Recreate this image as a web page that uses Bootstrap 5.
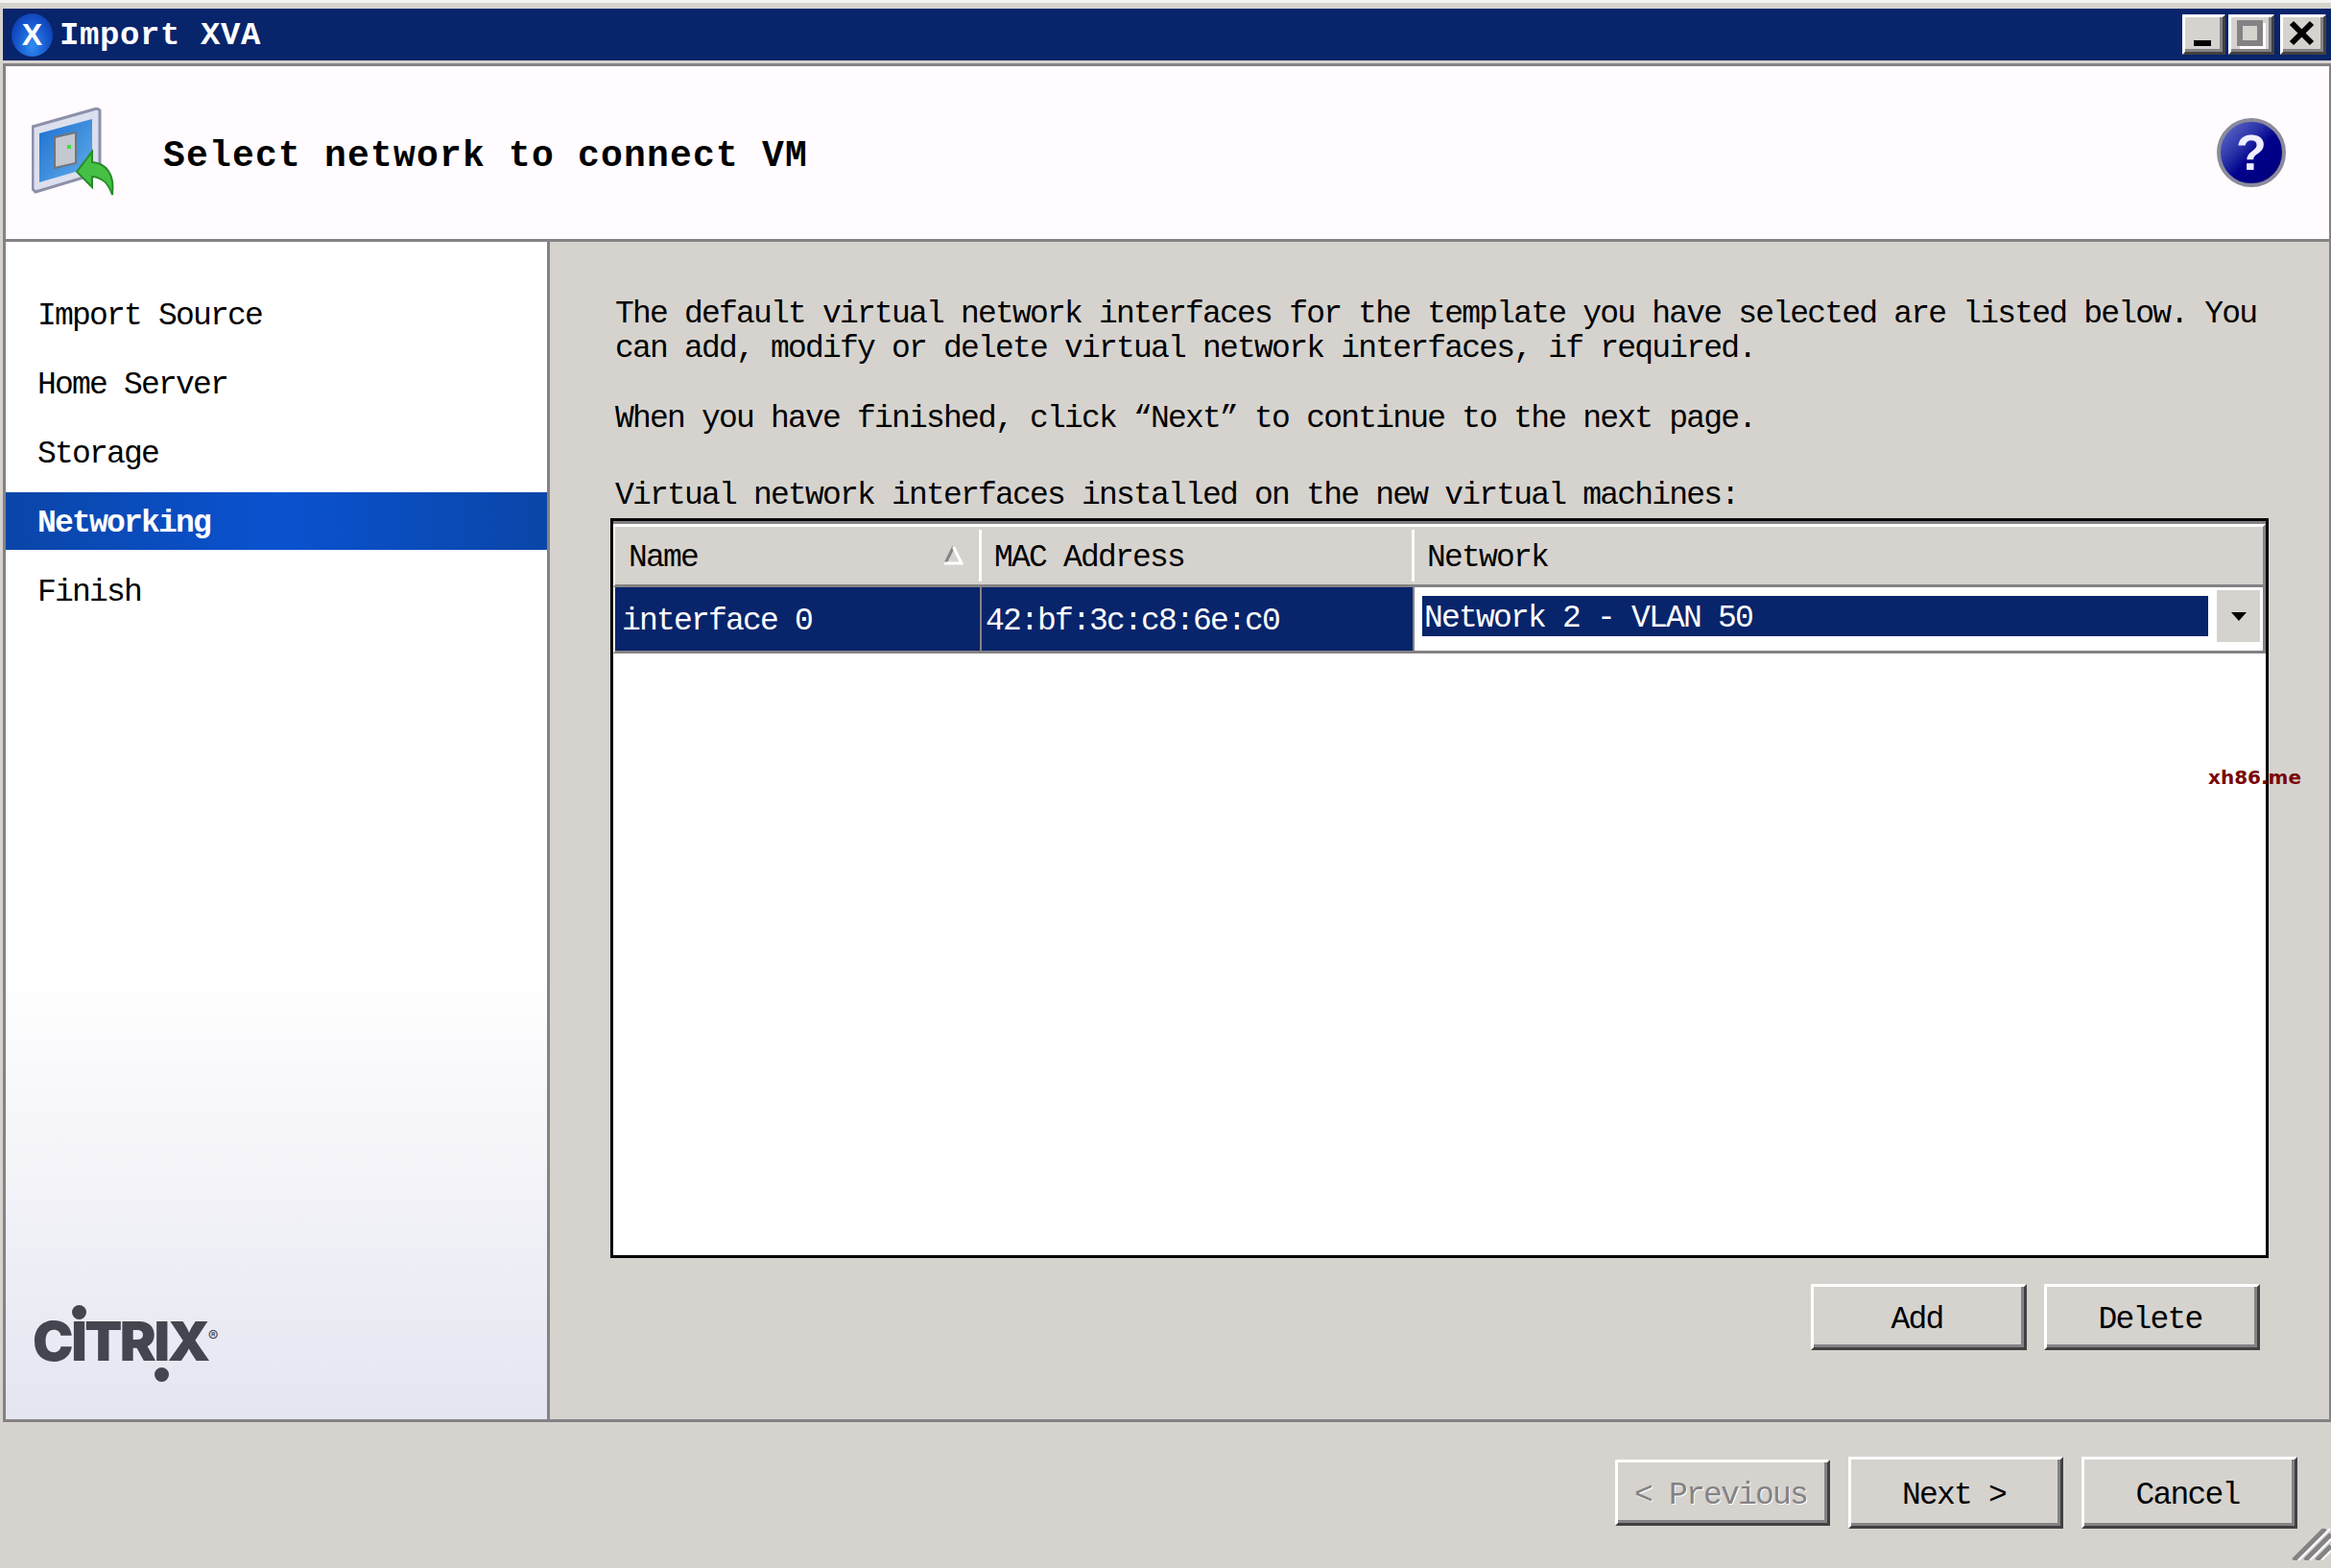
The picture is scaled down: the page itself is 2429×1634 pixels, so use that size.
<!DOCTYPE html>
<html lang="en">
<head>
    <meta charset="UTF-8">
    <meta name="viewport" content="width=device-width, initial-scale=1.0">
    <title>Import XVA</title>
    <link href="https://cdn.jsdelivr.net/npm/bootstrap@5.3.0/dist/css/bootstrap.min.css" rel="stylesheet">
    <style>
        html, body { height: 100%; overflow: hidden; }
        body {
            background: #d6d3ce;
            color: #000;
            font-family: "Liberation Mono", "DejaVu Sans Mono", monospace;
            font-size: 33px;
            letter-spacing: -1.8px;
            line-height: 36px;
        }
        .wiz-window {
            height: 1634px;
            border-top: 3px solid #f4f3f1;
            padding-top: 6px;
        }
        .title-strip {
            height: 54px;
            margin-left: 3px;
            background: #08246b;
            color: #fff;
            font-size: 34px;
            font-weight: 700;
            letter-spacing: .6px;
        }
        .title-text { padding-top: 2px; }
        .app-badge {
            width: 43px;
            height: 45px;
            margin: 0 7px 0 9px;
            color: #fff;
            font: 700 32px/45px "Liberation Sans", sans-serif;
            letter-spacing: 0;
            text-align: center;
            background: radial-gradient(ellipse at 50% 75%, #2f8cf0 0, #1450c8 60%, #0a2a90 100%);
        }
        .cap-btn {
            height: 42px;
            background: #d6d3ce;
            border-style: solid;
            border-width: 3px;
            border-color: #fff #424142 #424142 #fff;
            box-shadow: inset -3px -3px 0 #848284;
        }
        .cap-min { width: 45px; margin-right: 3px; }
        .cap-max { width: 48px; margin-right: 6px; }
        .cap-close { width: 48px; margin-right: 5px; }
        .min-bar { width: 18px; height: 6px; margin: 24px 0 0 9px; background: #000; }
        .max-box { width: 27px; height: 27px; margin: 3px 0 0 6px; border: 6px solid #848284; box-shadow: 3px 3px 0 #fff; }
        .wiz-header {
            height: 186px;
            margin: 3px 0 0 3px;
            background: #fffbff;
            border-style: solid;
            border-color: #848284;
            border-width: 3px 2px 3px 3px;
            padding: 0 45px 0 27px;
        }
        .wiz-heading {
            margin: 8px 0 0 47px;
            font-size: 38px;
            font-weight: 700;
            letter-spacing: 1.2px;
            line-height: 40px;
            font-family: inherit;
        }
        .help-badge {
            width: 72px;
            height: 72px;
            color: #eeeeff;
            font: 700 52px/1 "Liberation Sans", sans-serif;
            letter-spacing: 0;
            border: 4px solid #8a8a9c;
            background: linear-gradient(135deg, #6a72d0 0, #2a34a8 35%, #00008c 55%, #000078 100%);
        }
        .wiz-body {
            height: 1230px;
            margin-left: 3px;
            border-style: solid;
            border-color: #848284;
            border-width: 0 2px 3px 3px;
        }
        .wiz-sidebar {
            width: 567px;
            padding-top: 45px;
            border-right: 3px solid #848284;
            background: linear-gradient(#fff 0, #fff 62%, #e5e5f1 100%);
        }
        .wiz-steps { gap: 12px; }
        .wiz-step.nav-link {
            height: 60px;
            padding: 3px 0 0 33px;
            color: #000;
            line-height: 60px;
        }
        .wiz-step.nav-link.current {
            color: #fff;
            font-weight: 700;
            background: linear-gradient(to right, #0a46a8 0, #0a52d0 50%, #0a46a8 100%);
        }
        .citrix-mark {
            margin: auto 0 60px 28px;
            color: #45454f;
            font: 900 57px/42px "Inter", "Liberation Sans", sans-serif;
            letter-spacing: -2.5px;
        }
        .citrix-mark sup { top: -20px; font-size: 16px; font-weight: 400; letter-spacing: 0; }
        .dot-i { position: relative; }
        .dot-i::after {
            content: "";
            position: absolute;
            left: 1px;
            width: 15px;
            height: 15px;
            border-radius: 50%;
            background: #45454f;
        }
        .dot-up::after { top: -3px; }
        .dot-down::after { bottom: -8px; }
        .wiz-pane { padding: 58px 63px 72px; }
        .wiz-copy { padding-left: 5px; }
        .copy-gap-a { margin-top: 37px; }
        .copy-gap-b { margin-top: 44px; }
        .grid-box {
            margin-top: 5px;
            min-height: 0;
            background: #fff;
            border: 3px solid #000;
        }
        .iface-table.table {
            table-layout: fixed;
            width: 100%;
            margin: 0;
            border-collapse: separate;
            border-spacing: 0;
            border-top: 3px solid #848284;
        }
        .iface-table.table > thead > tr > th {
            height: 66px;
            padding: 3px 0;
            font-weight: 400;
            color: #000;
            background: #d6d3ce;
            border: 0;
            border-top: 3px solid #fff;
            border-bottom: 3px solid #848284;
            box-shadow: none;
        }
        .iface-table.table > tbody > tr > td {
            height: 69px;
            padding: 5px 0 0;
            color: #fff;
            background: #08246b;
            border: 0;
            border-bottom: 3px solid #848284;
            border-right: 2px solid #848284;
            box-shadow: none;
            vertical-align: middle;
        }
        .iface-table.table > thead > tr > th:first-child { border-left: 2px solid #fff; }
        .iface-table.table > tbody > tr > td:first-child { border-left: 2px solid #fff; padding-left: 7px; }
        .iface-table.table > tbody > tr > td:nth-child(2) { padding-left: 4px; }
        .iface-table.table > thead > tr > th:last-child,
        .iface-table.table > tbody > tr > td:last-child { border-right: 3px solid #848284; }
        .iface-table.table > tbody > tr > td:last-child { background: #fff; padding: 0 0 6px 8px; }
        .col-name { width: 384px; }
        .col-mac { width: 451px; }
        .head-cell {
            height: 54px;
            padding: 6px 0 0 13px;
            border-right: 3px solid;
            border-image: linear-gradient(to right, #848284 40%, #fff 40%) 1;
        }
        .head-cell.first { padding-left: 14px; padding-right: 15px; }
        .head-cell.last { border: 0; padding-left: 13px; }
        .sort-mark { margin-top: -8px; }
        .net-value { height: 42px; color: #fff; background: #08246b; padding: 3px 0 0 2px; line-height: 42px; }
        .combo-arrow {
            width: 45px;
            height: 54px;
            margin: 0 3px 0 9px;
            background: #d6d3ce;
        }
        .combo-arrow span {
            width: 0;
            height: 0;
            border-style: solid;
            border-width: 9px 8px 0;
            border-color: #000 transparent transparent;
        }
        .site-mark {
            left: 1662px;
            top: 256px;
            color: #7a0808;
            font: 700 20px/22px "DejaVu Sans", sans-serif;
            letter-spacing: 0;
        }
        .grid-actions { margin-top: 27px; padding-right: 9px; gap: 18px; }
        .wiz-btn.btn {
            width: 225px;
            height: 69px;
            padding: 5px 4px 0 0;
            color: #000;
            font-size: 33px;
            line-height: 1;
            letter-spacing: -1.8px;
            background: #d6d3ce;
            border-style: solid;
            border-width: 3px;
            border-color: #fff #424142 #424142 #fff;
            border-radius: 0;
            box-shadow: inset -3px -3px 0 #848284;
        }
        .wiz-btn.btn.tall { height: 75px; }
        .wiz-btn.btn.slim { width: 224px; }
        .wiz-btn.btn:disabled {
            opacity: 1;
            color: #848284;
            background: #d6d3ce;
            border-color: #fff #424142 #424142 #fff;
            text-shadow: 1px 1px 0 #fff;
        }
        .wiz-footer { padding: 36px 35px 0 0; gap: 19px; }
        .size-grip { right: 0; bottom: 8px; }
    </style>
</head>
<body>
    <div class="wiz-window d-flex flex-column position-relative">
        <div class="title-strip d-flex align-items-center">
            <span class="app-badge rounded-circle">X</span>
            <span class="title-text flex-grow-1">Import XVA</span>
            <div class="cap-btn cap-min"><div class="min-bar"></div></div>
            <div class="cap-btn cap-max"><div class="max-box"></div></div>
            <div class="cap-btn cap-close">
                <svg width="42" height="36" viewBox="0 0 42 36"><path d="M9 6 L30 27 M30 6 L9 27" stroke="#000" stroke-width="6" fill="none"/></svg>
            </div>
        </div>

        <div class="wiz-header d-flex align-items-center">
            <svg width="90" height="94" viewBox="0 0 90 94" class="flex-shrink-0">
                <defs>
                    <linearGradient id="screenFill" x1="0" y1="0" x2="1" y2="1">
                        <stop offset="0" stop-color="#1c6fd0"/>
                        <stop offset="1" stop-color="#62aeea"/>
                    </linearGradient>
                </defs>
                <path d="M1 20 L68 1 L71 3 L71 68 L4 88 L1 85 Z" fill="#dcdfee" stroke="#8c90aa" stroke-width="3"/>
                <path d="M8 27 L63 12 L63 62 L8 78 Z" fill="url(#screenFill)"/>
                <path d="M24 31 L46 26 L46 58 L24 63 Z" fill="#c4c8d0" stroke="#70747e" stroke-width="2"/>
                <rect x="37" y="39" width="4" height="4" fill="#3fe03f"/>
                <path d="M47 67 L63 46 L63 57 C77 58 87 69 84 91 C80 79 74 73 63 72 L63 83 Z" fill="#45c045" stroke="#2a8a2a" stroke-width="2"/>
            </svg>
            <h1 class="wiz-heading flex-grow-1">Select network to connect VM</h1>
            <div class="help-badge rounded-circle d-flex align-items-center justify-content-center">?</div>
        </div>

        <div class="wiz-body d-flex">
            <div class="wiz-sidebar d-flex flex-column flex-shrink-0">
                <nav class="nav flex-column wiz-steps">
                    <a class="nav-link wiz-step" href="#">Import Source</a>
                    <a class="nav-link wiz-step" href="#">Home Server</a>
                    <a class="nav-link wiz-step" href="#">Storage</a>
                    <a class="nav-link wiz-step current" href="#">Networking</a>
                    <a class="nav-link wiz-step" href="#">Finish</a>
                </nav>
                <div class="citrix-mark">C<span class="dot-i dot-up">I</span>TR<span class="dot-i dot-down">I</span>X<sup>®</sup></div>
            </div>

            <div class="wiz-pane d-flex flex-column flex-grow-1">
                <p class="wiz-copy mb-0">The default virtual network interfaces for the template you have selected are listed below.  You<br>can add, modify or delete virtual network interfaces, if required.</p>
                <p class="wiz-copy copy-gap-a mb-0">When you have finished, click “Next” to continue to the next page.</p>
                <p class="wiz-copy copy-gap-b mb-0">Virtual network interfaces installed on the new virtual machines:</p>

                <div class="grid-box flex-grow-1 position-relative">
                    <table class="table iface-table">
                        <thead>
                            <tr>
                                <th class="col-name">
                                    <div class="head-cell first d-flex align-items-center justify-content-between">
                                        <span>Name</span>
                                        <svg class="sort-mark" width="23" height="21" viewBox="0 0 23 21"><path d="M11.5 2 L3 19" stroke="#848284" stroke-width="3" fill="none"/><path d="M11.5 2 L20 19 L2 19" stroke="#fff" stroke-width="3" fill="none"/></svg>
                                    </div>
                                </th>
                                <th class="col-mac"><div class="head-cell d-flex align-items-center">MAC Address</div></th>
                                <th><div class="head-cell last d-flex align-items-center">Network</div></th>
                            </tr>
                        </thead>
                        <tbody>
                            <tr>
                                <td>interface 0</td>
                                <td>42:bf:3c:c8:6e:c0</td>
                                <td>
                                    <div class="d-flex align-items-center">
                                        <div class="net-value flex-grow-1">Network 2 - VLAN 50</div>
                                        <div class="combo-arrow d-flex align-items-center justify-content-center"><span></span></div>
                                    </div>
                                </td>
                            </tr>
                        </tbody>
                    </table>
                    <span class="site-mark position-absolute">xh86.me</span>
                </div>

                <div class="grid-actions d-flex justify-content-end">
                    <button class="btn wiz-btn" type="button">Add</button>
                    <button class="btn wiz-btn" type="button">Delete</button>
                </div>
            </div>
        </div>

        <div class="wiz-footer d-flex justify-content-end align-items-center">
            <button class="btn wiz-btn slim" type="button" disabled>&lt; Previous</button>
            <button class="btn wiz-btn tall slim" type="button">Next &gt;</button>
            <button class="btn wiz-btn tall" type="button">Cancel</button>
        </div>

        <svg class="size-grip position-absolute" width="41" height="33" viewBox="0 0 41 33">
            <path d="M2 33 L35 0 M14 33 L41 6 M26 33 L41 18" stroke="#848284" stroke-width="5" fill="none"/>
            <path d="M7 33 L40 0 M19 33 L41 11 M31 33 L41 23" stroke="#fff" stroke-width="2" fill="none"/>
        </svg>
    </div>

    <script src="https://cdn.jsdelivr.net/npm/bootstrap@5.3.0/dist/js/bootstrap.bundle.min.js"></script>
</body>
</html>
